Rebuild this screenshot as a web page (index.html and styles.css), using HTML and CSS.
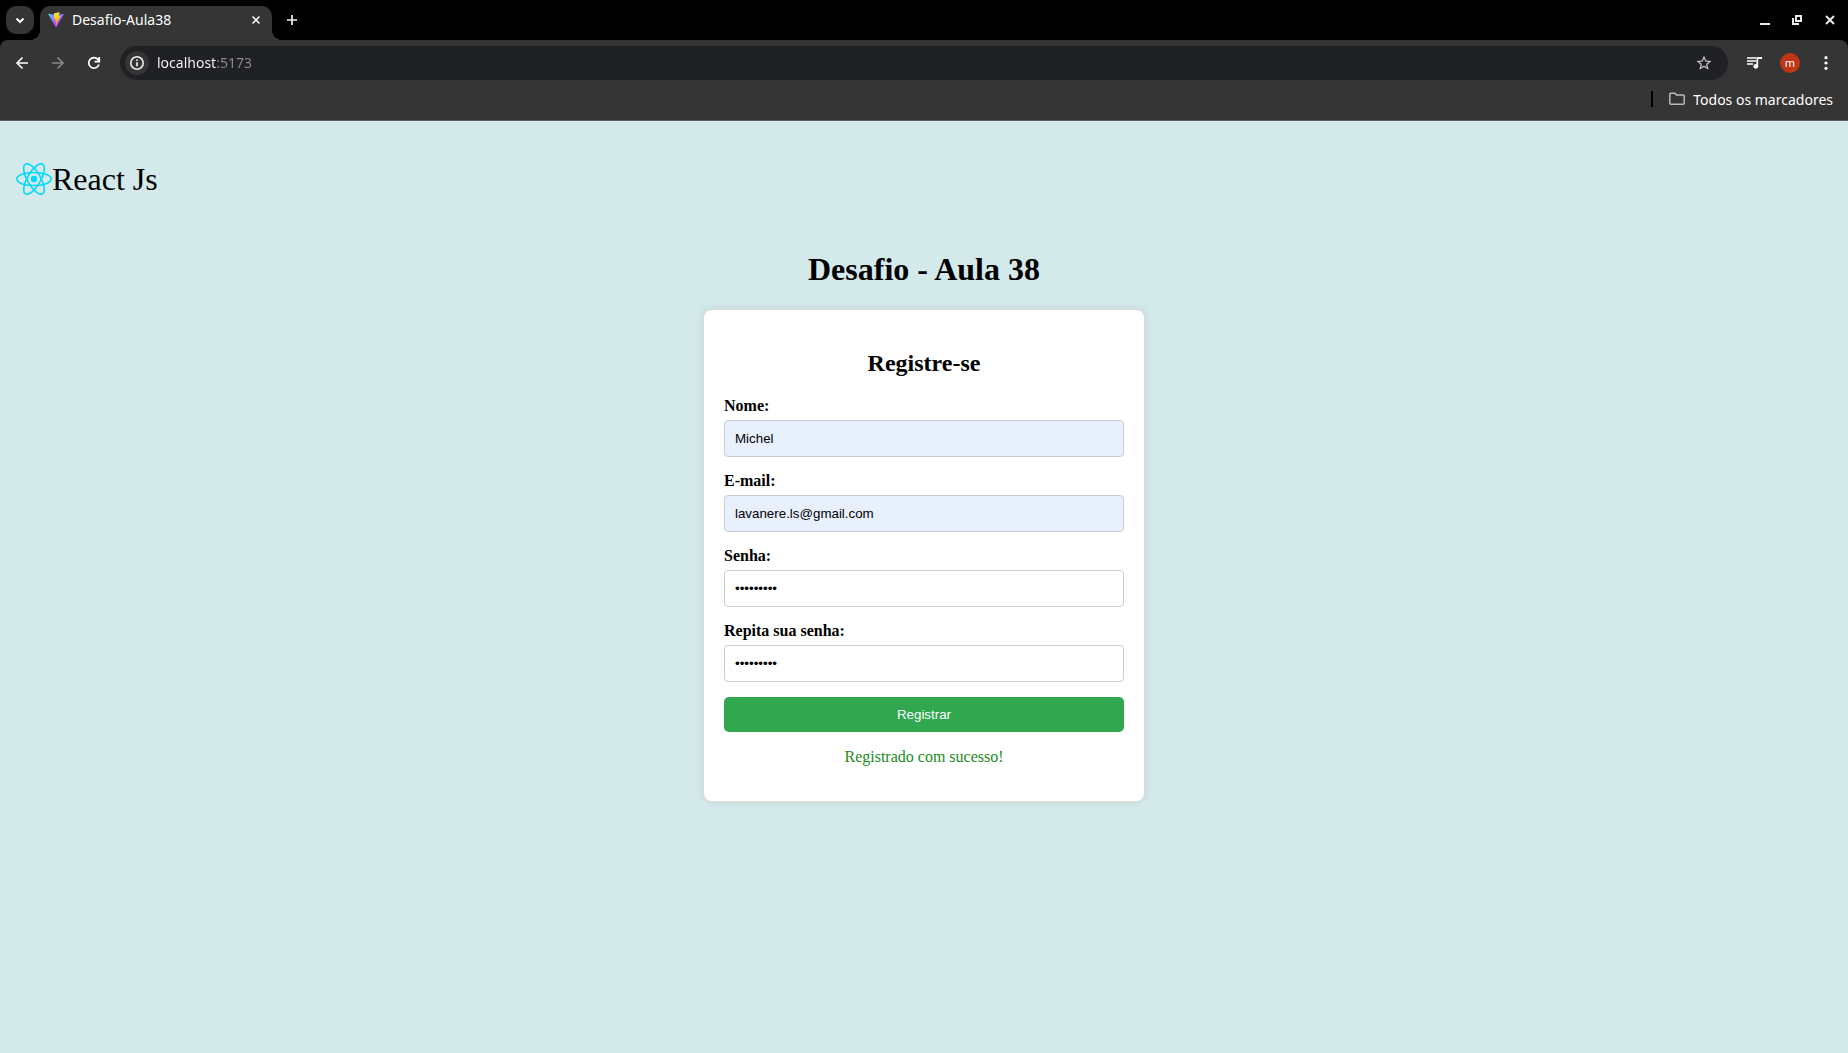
FILE: index.html
```html
<!DOCTYPE html>
<html lang="pt-BR">
<head>
<meta charset="utf-8">
<title>Desafio-Aula38</title>
<link rel="stylesheet" href="styles.css">
</head>
<body>
<div class="browser">
  <header class="chrome">
    <div class="tab-strip">
      <button class="tab-search" aria-label="Pesquisar guias"><svg width="16" height="16" viewBox="0 0 16 16"><path d="M4.500 6.500L8 10l3.500-3.500" fill="none" stroke="#fff" stroke-width="2"/></svg></button>
      <div class="tab">
        <svg class="favicon" width="16" height="16" viewBox="0 0 410 404">
          <defs>
            <linearGradient id="shield" x1="6" y1="33" x2="235" y2="344" gradientUnits="userSpaceOnUse"><stop stop-color="#41d1ff"/><stop offset="1" stop-color="#bd34fe"/></linearGradient>
            <linearGradient id="bolt" x1="194" y1="8" x2="236" y2="292" gradientUnits="userSpaceOnUse"><stop stop-color="#ffea83"/><stop offset=".1" stop-color="#ffdd35"/><stop offset="1" stop-color="#ffa800"/></linearGradient>
          </defs>
          <path fill="url(#shield)" d="M399.641 59.525L215.643 388.545C211.844 395.338 202.084 395.378 198.228 388.618L10.582 59.556C6.381 52.190 12.680 43.267 21.028 44.759L205.223 77.682C206.398 77.893 207.601 77.891 208.776 77.676L389.119 44.806C397.439 43.289 403.768 52.143 399.641 59.525Z"/>
          <path fill="url(#bolt)" d="M292.965 1.574L156.801 28.255C154.563 28.694 152.906 30.590 152.771 32.866L144.395 174.330C144.198 177.662 147.258 180.248 150.510 179.498L188.420 170.749C191.967 169.931 195.172 173.055 194.443 176.622L183.180 231.775C182.422 235.487 185.907 238.661 189.532 237.560L212.947 230.446C216.577 229.344 220.065 232.527 219.297 236.242L201.398 322.875C200.278 328.294 207.486 331.249 210.492 326.603L212.500 323.500L323.454 102.072C325.312 98.365 322.108 94.137 318.036 94.923L279.014 102.454C275.347 103.161 272.227 99.746 273.262 96.158L298.731 7.867C299.767 4.273 296.636 .855 292.965 1.574Z"/>
        </svg>
        <span class="tab-title">Desafio-Aula38</span>
        <button class="bare" aria-label="Fechar guia"><svg width="16" height="16" viewBox="0 0 16 16"><path d="M4.500 4.500l7 7m0-7l-7 7" stroke="#eee" stroke-width="1.700"/></svg></button>
      </div>
      <button class="bare new-tab" aria-label="Nova guia"><svg width="16" height="16" viewBox="0 0 16 16"><path d="M8 3v10M3 8h10" stroke="#eee" stroke-width="1.700"/></svg></button>
      <div class="window-buttons">
        <button class="bare" aria-label="Minimizar"><svg width="16" height="16" viewBox="0 0 16 16"><path d="M4 12h10" stroke="#e8eaed" stroke-width="2"/></svg></button>
        <button class="bare" aria-label="Restaurar"><svg width="16" height="16" viewBox="0 0 16 16"><path d="M7 4h5v5H7zM4 6v6h6" fill="none" stroke="#e8eaed" stroke-width="2"/></svg></button>
        <button class="bare" aria-label="Fechar"><svg width="16" height="16" viewBox="0 0 16 16"><path d="M4 4l8 8m0-8l-8 8" stroke="#e8eaed" stroke-width="2"/></svg></button>
      </div>
    </div>
    <div class="toolbar">
      <div class="nav">
        <button class="bare" aria-label="Voltar"><svg width="16" height="16" viewBox="0 0 16 16"><path d="M14 8H3m5.500-5.500L3 8l5.500 5.500" fill="none" stroke="#fff" stroke-width="1.600"/></svg></button>
        <button class="bare" aria-label="Avançar"><svg width="16" height="16" viewBox="0 0 16 16"><path d="M2 8h11M7.500 2.500L13 8l-5.500 5.500" fill="none" stroke="#888" stroke-width="1.600"/></svg></button>
        <button class="bare" aria-label="Recarregar"><svg width="16" height="16" viewBox="0 0 16 16"><path d="M12.900 9.500A5.200 5.200 0 1 1 12 4.600l1 1.600M13.200 2v4.700H8.500" fill="none" stroke="#fff" stroke-width="1.800"/></svg></button>
      </div>
      <div class="address">
        <button class="site-info" aria-label="Ver informações do site"><svg width="16" height="16" viewBox="0 0 16 16"><circle cx="8" cy="8" r="6.200" fill="none" stroke="#eee" stroke-width="1.600"/><path d="M8 7.300v4M8 4.400v1.700" stroke="#eee" stroke-width="1.700"/></svg></button>
        <input class="url" type="text" value="localhost:5173" aria-label="Endereço">
        <button class="bare" aria-label="Adicionar aos favoritos"><svg width="18" height="18" viewBox="0 0 24 24"><path fill="#c7c7c7" d="M22 9.240l-7.190-.62L12 2 9.190 8.630 2 9.240l5.460 4.730L5.820 21 12 17.270 18.180 21l-1.630-7.030L22 9.240zM12 15.400l-3.760 2.270 1-4.280-3.320-2.880 4.380-.38L12 6.100l1.710 4.040 4.380.38-3.320 2.880 1 4.280L12 15.400z"/></svg></button>
      </div>
      <div class="tools">
        <button class="bare" aria-label="Controlar mídia"><svg width="16" height="16" viewBox="0 0 16 16"><path d="M1 3h9M1 6h9M1 9h6" stroke="#fff" stroke-width="1.700"/><path d="M11.300 11V3H16" fill="none" stroke="#fff" stroke-width="1.800"/><circle cx="9.800" cy="11.300" r="2.400" fill="#fff"/></svg></button>
        <button class="avatar" aria-label="Perfil">m</button>
        <button class="bare" aria-label="Menu"><svg width="16" height="16" viewBox="0 0 16 16" fill="#fff"><circle cx="8" cy="2.700" r="1.600"/><circle cx="8" cy="8" r="1.600"/><circle cx="8" cy="13.300" r="1.600"/></svg></button>
      </div>
    </div>
    <div class="bookmarks">
      <span class="divider"></span>
      <button class="all-bookmarks"><svg width="16" height="16" viewBox="0 0 16 16"><path d="M.8 3.200q0-1 1-1h4l1.700 1.700h6.700q1 0 1 1v7.300q0 1-1 1H1.800q-1 0-1-1z" fill="none" stroke="#bbb" stroke-width="1.500"/></svg>Todos os marcadores</button>
    </div>
  </header>
  <main class="page">
    <div class="brand">
      <svg width="36" height="32" viewBox="-11.500 -10.230 23 20.460"><circle r="2.050" fill="#00d8ff"/><g fill="none" stroke="#00d8ff"><ellipse rx="11" ry="4.200"/><ellipse rx="11" ry="4.200" transform="rotate(60)"/><ellipse rx="11" ry="4.200" transform="rotate(120)"/></g></svg>
      <span>React Js</span>
    </div>
    <h1 class="title">Desafio - Aula 38</h1>
    <form class="card">
      <h2 class="card-title">Registre-se</h2>
      <div class="field"><label for="nome">Nome:</label><input class="filled" id="nome" type="text" value="Michel"></div>
      <div class="field"><label for="email">E-mail:</label><input class="filled" id="email" type="email" value="lavanere.ls@gmail.com"></div>
      <div class="field"><label for="senha">Senha:</label><input id="senha" type="password" value="123456789"></div>
      <div class="field"><label for="repita">Repita sua senha:</label><input id="repita" type="password" value="123456789"></div>
      <button class="submit" type="button">Registrar</button>
      <p class="message">Registrado com sucesso!</p>
    </form>
  </main>
</div>
</body>
</html>
```
FILE: styles.css
```css
* { box-sizing: border-box; }

body {
  margin: 0;
  font-family: "Liberation Serif", "Times New Roman", serif;
  font-size: 16px;
  line-height: 18px;
  color: #000;
}

button { border: 0; padding: 0; }
svg { display: block; }

.browser {
  display: flex;
  flex-direction: column;
  min-height: 100vh;
}

/* Browser frame */
.chrome {
  background: #000;
  border-bottom: 1px solid #625c5c;
  color: #fff;
  font-family: "Noto Sans", sans-serif;
}

.bare { background: none; }

.tab-strip {
  display: flex;
  align-items: center;
  height: 40px;
  padding: 0 10px 0 6px;
}

.tab-search {
  display: grid;
  place-items: center;
  width: 28px;
  height: 28px;
  border-radius: 10px;
  background: #353535;
}

.tab {
  position: relative;
  display: flex;
  align-items: center;
  align-self: flex-end;
  gap: 8px;
  width: 232px;
  height: 34px;
  margin-left: 6px;
  padding: 0 8px 6px;
  border-radius: 10px 10px 0 0;
  background: #353535;
}

.tab::before,
.tab::after {
  content: "";
  position: absolute;
  bottom: 0;
  width: 10px;
  height: 10px;
}

.tab::before {
  right: 100%;
  background: radial-gradient(circle at 0 0, #000 10px, #353535 10px);
}

.tab::after {
  left: 100%;
  background: radial-gradient(circle at 100% 0, #000 10px, #353535 10px);
}

.tab-title {
  flex: 1;
  font-size: 14px;
}

.new-tab { margin-left: 12px; }

.window-buttons {
  display: flex;
  gap: 17px;
  margin-left: auto;
}

.toolbar {
  display: flex;
  align-items: center;
  height: 46px;
  padding: 0 14px;
  border-radius: 8px 8px 0 0;
  background: #353535;
}

.nav {
  display: flex;
  gap: 20px;
  margin-right: 18px;
}

.address {
  display: flex;
  flex: 1;
  align-items: center;
  gap: 8px;
  height: 34px;
  padding: 0 15px 0 5px;
  border-radius: 17px;
  background: #202124;
}

.site-info {
  display: grid;
  place-items: center;
  width: 24px;
  height: 24px;
  border-radius: 50%;
  background: #353535;
}

.url {
  flex: 1;
  border: 0;
  padding: 0 0 2px;
  font-family: "Noto Sans", sans-serif;
  font-size: 14px;
  background: linear-gradient(90deg, #fff 59px, #8b8c8e 59px);
  background-clip: text;
  color: transparent;
}

.tools {
  display: flex;
  align-items: center;
  gap: 18px;
  margin-left: 18px;
}

.avatar {
  width: 20px;
  height: 20px;
  border-radius: 50%;
  background: #bf3617;
  color: #fff;
  font-family: "Noto Sans", sans-serif;
  font-size: 11px;
  line-height: 18px;
}

.bookmarks {
  display: flex;
  align-items: center;
  justify-content: flex-end;
  gap: 16px;
  height: 34px;
  padding: 0 15px 8px;
  background: #353535;
}

.divider {
  width: 2px;
  height: 16px;
  background: #000;
}

.all-bookmarks {
  display: flex;
  align-items: center;
  gap: 8px;
  background: none;
  color: #fff;
  font-family: "Noto Sans", sans-serif;
  font-size: 14px;
}

/* Page */
.page {
  flex: 1;
  padding: 40px 16px;
  background: #d4e9e9;
}

.brand {
  display: flex;
  align-items: center;
  font-size: 32px;
  line-height: 36px;
}

.title {
  margin: 54px 0 23px;
  font-size: 32px;
  line-height: 36px;
  text-align: center;
}

.card {
  max-width: 440px;
  margin: 0 auto;
  padding: 20px;
  border-radius: 8px;
  background: #fff;
  box-shadow: 0 0 0 1px #dddddd, 0 0 10px rgba(0, 0, 0, 0.1);
}

.card-title {
  margin: 20px 0;
  font-size: 24px;
  line-height: 27px;
  text-align: center;
}

.field { margin-bottom: 15px; }

.field label {
  display: block;
  margin-bottom: 5px;
  font-weight: bold;
}

.field input {
  display: block;
  width: 100%;
  height: 37px;
  padding: 10px;
  border: 1px solid #ccc;
  border-radius: 4px;
  background: #fff;
  font-family: "Liberation Sans", Arial, sans-serif;
}

.field .filled { background: #e8f0fe; }

.submit {
  display: block;
  width: 100%;
  height: 35px;
  border-radius: 5px;
  background: #31a74f;
  color: #fff;
  font-family: "Liberation Sans", Arial, sans-serif;
}

.message {
  margin: 16px 0 15px;
  color: #228b22;
  text-align: center;
}
```
